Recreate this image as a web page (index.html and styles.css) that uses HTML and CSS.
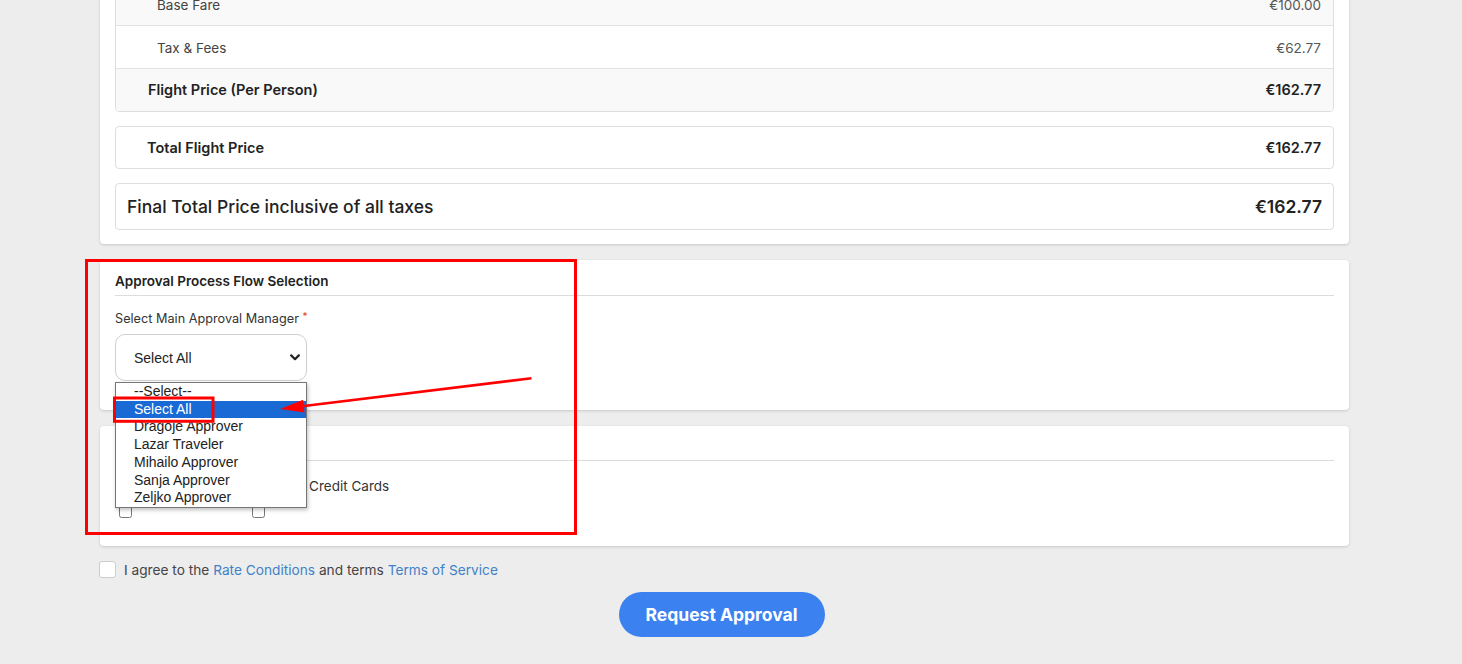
FILE: index.html
```html
<!DOCTYPE html>
<html lang="en">
<head>
  <meta charset="UTF-8">
  <meta name="viewport" content="width=device-width, initial-scale=1.0">
  <title>Flight Booking - Approval</title>
  <link rel="stylesheet" href="styles.css">
</head>
<body>
  <div class="page">
    <!-- Price summary -->
    <section class="card price-card">
      <div class="breakdown">
        <div class="row shaded"><span class="sub">Base Fare</span><span class="amount">€100.00</span></div>
        <div class="row"><span class="sub">Tax &amp; Fees</span><span class="amount">€62.77</span></div>
        <div class="row shaded strong"><span>Flight Price (Per Person)</span><span>€162.77</span></div>
      </div>
      <div class="total-box"><span>Total Flight Price</span><span>€162.77</span></div>
      <div class="final-box"><span>Final Total Price inclusive of all taxes</span><span class="final-amount">€162.77</span></div>
    </section>

    <!-- Approval flow -->
    <section class="card approval-card">
      <h3 class="card-title">Approval Process Flow Selection</h3>
      <label class="field-label">Select Main Approval Manager <span class="req">*</span></label>
      <div class="select-wrap">
        <div class="select-box">
          <span>Select All</span>
          <svg class="chevron" width="10" height="7" viewBox="0 0 10 7"><path d="M1.2 1.4 L5 5.2 L8.8 1.4" fill="none" stroke="#222" stroke-width="2.2" stroke-linecap="round" stroke-linejoin="round"/></svg>
        </div>
        <ul class="select-popup">
          <li>--Select--</li>
          <li class="selected">Select All</li>
          <li>Dragoje Approver</li>
          <li>Lazar Traveler</li>
          <li>Mihailo Approver</li>
          <li>Sanja Approver</li>
          <li>Zeljko Approver</li>
        </ul>
      </div>
    </section>

    <!-- Payment method -->
    <section class="card payment-card">
      <h3 class="card-title">Payment</h3>
      <div class="pay-options">
        <label class="pay-option"><span>Company</span><input type="checkbox"></label>
        <label class="pay-option"><span>Business Credit Cards</span><input type="checkbox"></label>
      </div>
    </section>

    <div class="agree">
      <span class="agree-box"></span>
      <span>I agree to the <a href="#">Rate Conditions</a> and terms <a href="#">Terms of Service</a></span>
    </div>

    <div class="actions">
      <button class="request-btn">Request Approval</button>
    </div>
  </div>

  <!-- Screenshot annotations -->
  <svg class="annotations" width="1462" height="664" viewBox="0 0 1462 664">
    <rect x="86.5" y="260.5" width="489" height="273" fill="none" stroke="#f00" stroke-width="3"/>
    <rect x="114.5" y="398" width="98.5" height="23.3" fill="none" stroke="#f00" stroke-width="3"/>
    <line x1="531.5" y1="378.3" x2="300" y2="406.5" stroke="#f00" stroke-width="2.6"/>
    <polygon points="280,409 304.5,412.4 303.1,399.8" fill="#f00"/>
  </svg>
</body>
</html>
```

FILE: styles.css
```css
* {
  box-sizing: border-box;
}

body {
  margin: 0;
  background-color: #ededed;
  font-family: "Inter", "Lato", sans-serif;
  color: #222;
  position: relative;
  height: 664px;
  overflow: hidden;
}

.page {
  width: 1249px;
  margin: -33px 0 0 100px;
}

.card {
  background-color: #fff;
  border-radius: 4px;
  box-shadow: 0 1px 3px rgba(0, 0, 0, 0.16);
}

/* Price summary */
.price-card {
  padding: 15px 15px 14px;
}

.breakdown {
  border: 1px solid #dedede;
  border-radius: 4px;
  overflow: hidden;
}

.row {
  display: flex;
  justify-content: space-between;
  align-items: center;
  height: 43px;
  padding: 1px 12px 0 41px;
  font-size: 13.5px;
  color: #444;
  border-bottom: 1px solid #e2e2e2;
}

.row:last-child {
  border-bottom: none;
  height: 42px;
  padding-top: 0;
  padding-bottom: 1px;
}

.row.shaded {
  background-color: #f9f9f9;
}

.row .amount {
  color: #555;
}

.row.strong {
  padding-left: 32px;
  font-size: 14.5px;
  font-weight: 600;
  color: #222;
}

.total-box,
.final-box {
  display: flex;
  justify-content: space-between;
  align-items: center;
  border: 1px solid #dedede;
  border-radius: 4px;
  margin-top: 14px;
}

.total-box {
  height: 43px;
  padding: 0 12px 0 31px;
  font-size: 14.5px;
  font-weight: 600;
}

.final-box {
  height: 47px;
  padding: 0 11px;
  font-size: 17.5px;
  font-weight: 500;
}

.final-amount {
  font-weight: 600;
}

/* Approval + payment cards */
.approval-card {
  margin-top: 16px;
  padding: 11px 15px 29px;
}

.card-title {
  margin: 0;
  font-size: 13.5px;
  line-height: 20px;
  font-weight: 600;
  padding-bottom: 4px;
  border-bottom: 1px solid #dcdcdc;
}

.field-label {
  display: block;
  margin-top: 14px;
  font-size: 12.7px;
  line-height: 18px;
  color: #333;
}

.req {
  color: #e53935;
  font-size: 10px;
  vertical-align: top;
  line-height: 12px;
}

.select-wrap {
  position: relative;
  width: 192px;
  margin-top: 6px;
}

.select-box {
  display: flex;
  justify-content: space-between;
  align-items: center;
  height: 47px;
  padding: 0 6px 0 18px;
  border: 1px solid #cfcfcf;
  border-radius: 10px;
  font-family: "Liberation Sans", Arial, sans-serif;
  font-size: 14px;
  color: #222;
}

.select-popup {
  position: absolute;
  top: 48px;
  left: 0;
  width: 192px;
  margin: 0;
  padding: 0;
  list-style: none;
  background-color: #fff;
  border: 1px solid #767676;
  box-shadow: 1px 2px 4px rgba(0, 0, 0, 0.25);
  font-family: "Liberation Sans", Arial, sans-serif;
  font-size: 14px;
  line-height: 17.7px;
  color: #222;
  z-index: 10;
}

.select-popup li {
  padding-left: 18px;
}

.select-popup li.selected {
  background-color: #1a6ad6;
  color: #fff;
}

.payment-card {
  margin-top: 16px;
  padding: 10px 15px 28px;
}

.pay-options {
  display: grid;
  grid-template-columns: 133px auto;
  justify-content: start;
  margin-top: 15px;
}

.pay-option {
  display: flex;
  flex-direction: column;
  align-items: flex-start;
  font-size: 13.5px;
  line-height: 20px;
  color: #333;
}

.pay-option input {
  margin: 9px 0 0 4px;
  width: 13px;
  height: 13px;
}

/* Terms + submit */
.agree {
  display: flex;
  align-items: center;
  gap: 8px;
  margin-top: 15px;
  margin-left: -1px;
  font-size: 13.7px;
  color: #444;
}

.agree-box {
  width: 17px;
  height: 17px;
  border: 1px solid #cdcdcd;
  border-radius: 3px;
  background-color: #fff;
}

.agree a {
  color: #3f82c7;
  text-decoration: none;
}

.actions {
  display: flex;
  justify-content: center;
  margin-top: 14px;
  padding-right: 6px;
}

.request-btn {
  width: 206px;
  height: 45px;
  border: none;
  border-radius: 23px;
  background-color: #3b82f0;
  color: #fff;
  font-family: inherit;
  font-size: 17.5px;
  font-weight: 700;
  cursor: pointer;
}

.annotations {
  position: absolute;
  top: 0;
  left: 0;
  pointer-events: none;
  z-index: 20;
}
```
